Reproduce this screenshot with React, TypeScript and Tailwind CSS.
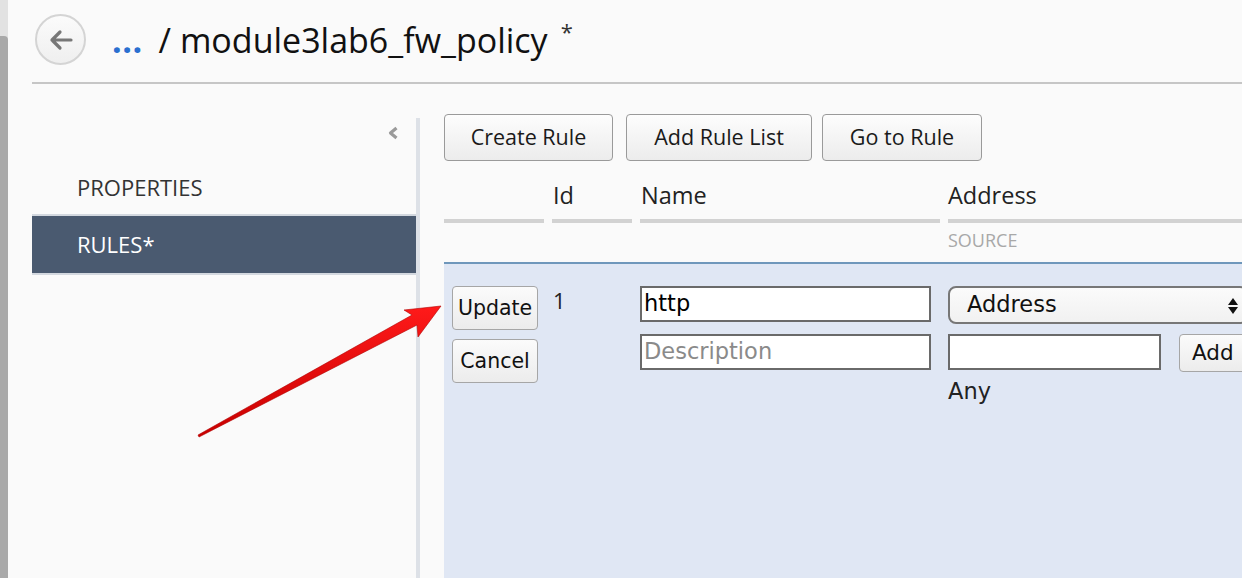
import React from "react";

const sans = { fontFamily: '"Open Sans", "Noto Sans", sans-serif' };
const ctrl = { fontFamily: '"DejaVu Sans", "Liberation Sans", sans-serif' };

function GrayButton({ children, w }: { children: React.ReactNode; w: string }) {
  return (
    <button
      className={`${w} h-[47px] rounded-[4px] border border-[#9a9a9a] bg-gradient-to-b from-[#fdfdfd] to-[#ececec] text-[21.5px] text-[#1a1a1a] flex items-center justify-center shrink-0`}
      style={sans}
    >
      {children}
    </button>
  );
}

export default function App() {
  return (
    <div className="relative w-[1242px] h-[578px] overflow-hidden bg-[#fafafa] flex">
      {/* window edge */}
      <div className="w-[8px] shrink-0 h-full flex flex-col bg-[#e2e2e2]">
        <div className="h-[36px]" />
        <div className="flex-1 bg-[#a9a9a9] rounded-tr-[4px]" />
      </div>

      <div className="flex-1 min-w-0 pl-[24px] flex flex-col">
        {/* header */}
        <div className="h-[84px] flex items-center border-b-2 border-[#c6c6c6] shrink-0 pb-[3px]">
          <div className="ml-[3px] w-[51px] h-[51px] shrink-0 rounded-full border-2 border-[#d4d4d4] bg-gradient-to-b from-[#fbfbfb] to-[#efefef] flex items-center justify-center">
            <svg width="26" height="22" viewBox="0 0 26 22">
              <path d="M23 11H4M12 3L4 11l8 8" fill="none" stroke="#777" strokeWidth="3.2" strokeLinecap="round" strokeLinejoin="round" />
            </svg>
          </div>
          <div className="ml-[26px] flex items-baseline" style={sans}>
            <span className="text-[34px] text-[#2a6fd0] tracking-[0.5px] font-bold leading-none">...</span>
            <span className="ml-[16px] text-[34px] text-[#111] leading-none">/ module3lab6_fw_policy</span>
            <span className="ml-[13px] text-[22px] text-[#333] self-start -mt-[8px]">*</span>
          </div>
        </div>

        {/* body */}
        <div className="flex-1 flex">
          {/* sidebar */}
          <div className="w-[384px] shrink-0 flex flex-col" style={sans}>
            <div className="h-[84px] flex justify-end pt-[42px] pr-[17px]">
              <svg width="12" height="14" viewBox="0 0 12 14">
                <path d="M9.5 2L3.5 7l6 5" fill="none" stroke="#9a9a9a" strokeWidth="3.2" strokeLinejoin="round" />
              </svg>
            </div>
            <div className="h-[46px] flex items-center pl-[45px] pb-[8px] text-[22px] text-[#333]">PROPERTIES</div>
            <div className="h-[61px] flex items-center pl-[45px] text-[22px] text-white bg-[#4a5a70] border-y-2 border-[#d3d8df]">RULES*</div>
          </div>
          <div className="w-[4px] shrink-0 mt-[34px] bg-[#dde1e7]" />

          {/* content */}
          <div className="ml-[24px] flex-1 min-w-0 flex flex-col pt-[30px]">
            <div className="flex items-center">
              <GrayButton w="w-[169px]">Create Rule</GrayButton>
              <div className="w-[13px] shrink-0" />
              <GrayButton w="w-[186px]">Add Rule List</GrayButton>
              <div className="w-[10px] shrink-0" />
              <GrayButton w="w-[160px]">Go to Rule</GrayButton>
            </div>

            {/* column headers */}
            <div className="h-[101px] flex pt-[18px] text-[23.5px] text-[#222] shrink-0" style={sans}>
              <div className="w-[100px] shrink-0 flex flex-col">
                <div className="h-[40px]" />
                <div className="h-[4px] bg-[#d2d2d2]" />
              </div>
              <div className="w-[80px] shrink-0 ml-[8px] flex flex-col">
                <div className="h-[40px] leading-[32px] pl-[1px]">Id</div>
                <div className="h-[4px] bg-[#d2d2d2]" />
              </div>
              <div className="w-[300px] shrink-0 ml-[8px] flex flex-col">
                <div className="h-[40px] leading-[32px] pl-[1px]">Name</div>
                <div className="h-[4px] bg-[#d2d2d2]" />
              </div>
              <div className="flex-1 ml-[8px] flex flex-col">
                <div className="h-[40px] leading-[32px]">Address</div>
                <div className="h-[4px] bg-[#d2d2d2]" />
                <div className="mt-[5px] text-[18px] text-[#a8a8a8] leading-[24px]">SOURCE</div>
              </div>
            </div>

            {/* edit row */}
            <div className="flex-1 bg-[#e0e7f4] border-t-2 border-[#6f97bb] flex pt-[22px]" style={ctrl}>
              <div className="w-[100px] shrink-0 pl-[8px] flex flex-col gap-[9px]">
                <button className="w-[86px] h-[44px] rounded-[4px] border border-[#a6a6a6] bg-gradient-to-b from-[#fbfbfb] to-[#ececec] text-[20.5px] text-[#111]">Update</button>
                <button className="w-[86px] h-[44px] rounded-[4px] border border-[#a6a6a6] bg-gradient-to-b from-[#fbfbfb] to-[#ececec] text-[20.5px] text-[#111]">Cancel</button>
              </div>
              <div className="w-[80px] shrink-0 ml-[8px] pl-[1px] text-[22px] text-[#222] leading-[28px]" style={sans}>1</div>
              <div className="w-[300px] shrink-0 ml-[8px] flex flex-col gap-[12px]">
                <div className="w-[291px] h-[36px] border-2 border-[#6a6a6a] bg-white pl-[2px] flex items-center text-[22.5px] text-black">http</div>
                <div className="w-[291px] h-[36px] border-2 border-[#6a6a6a] bg-white pl-[2px] flex items-center text-[22.5px] text-[#8a8a8a]">Description</div>
              </div>
              <div className="flex-1 ml-[8px] flex flex-col">
                <div className="w-[300px] h-[38px] rounded-[8px] border-2 border-[#777] bg-gradient-to-b from-[#fbfbfb] to-[#f1f1f1] flex items-center pl-[17px] text-[22.5px] text-[#111] relative">
                  Address
                  <svg className="absolute left-[277px] top-[9px]" width="12" height="18" viewBox="0 0 12 18">
                    <path d="M6 1L11 8H1z M1 10h10L6 17z" fill="#111" />
                  </svg>
                </div>
                <div className="flex items-start mt-[10px]">
                  <div className="w-[213px] h-[36px] shrink-0 border-2 border-[#6a6a6a] bg-white" />
                  <button className="ml-[18px] w-[80px] h-[38px] rounded-[4px] border border-[#a6a6a6] bg-gradient-to-b from-[#fbfbfb] to-[#ececec] text-[21.5px] text-[#111] text-left pl-[12px] shrink-0">Add</button>
                </div>
                <div className="mt-[5px] text-[22.5px] text-[#222] leading-[28px]">Any</div>
              </div>
            </div>
          </div>
        </div>
      </div>

      {/* red annotation arrow */}
      <svg className="absolute inset-0 pointer-events-none" width="1242" height="578" viewBox="0 0 1242 578">
        <defs>
          <linearGradient id="ar" x1="0" y1="0" x2="0" y2="1">
            <stop offset="0" stopColor="#ff1a1a" />
            <stop offset="1" stopColor="#c80000" />
          </linearGradient>
        </defs>
        <polygon
          points="198,435 412,315 404,310 441,306 418,337 417,325 199,437"
          fill="url(#ar)"
          stroke="#b00000"
          strokeWidth="0.6"
          strokeLinejoin="round"
        />
      </svg>
    </div>
  );
}
